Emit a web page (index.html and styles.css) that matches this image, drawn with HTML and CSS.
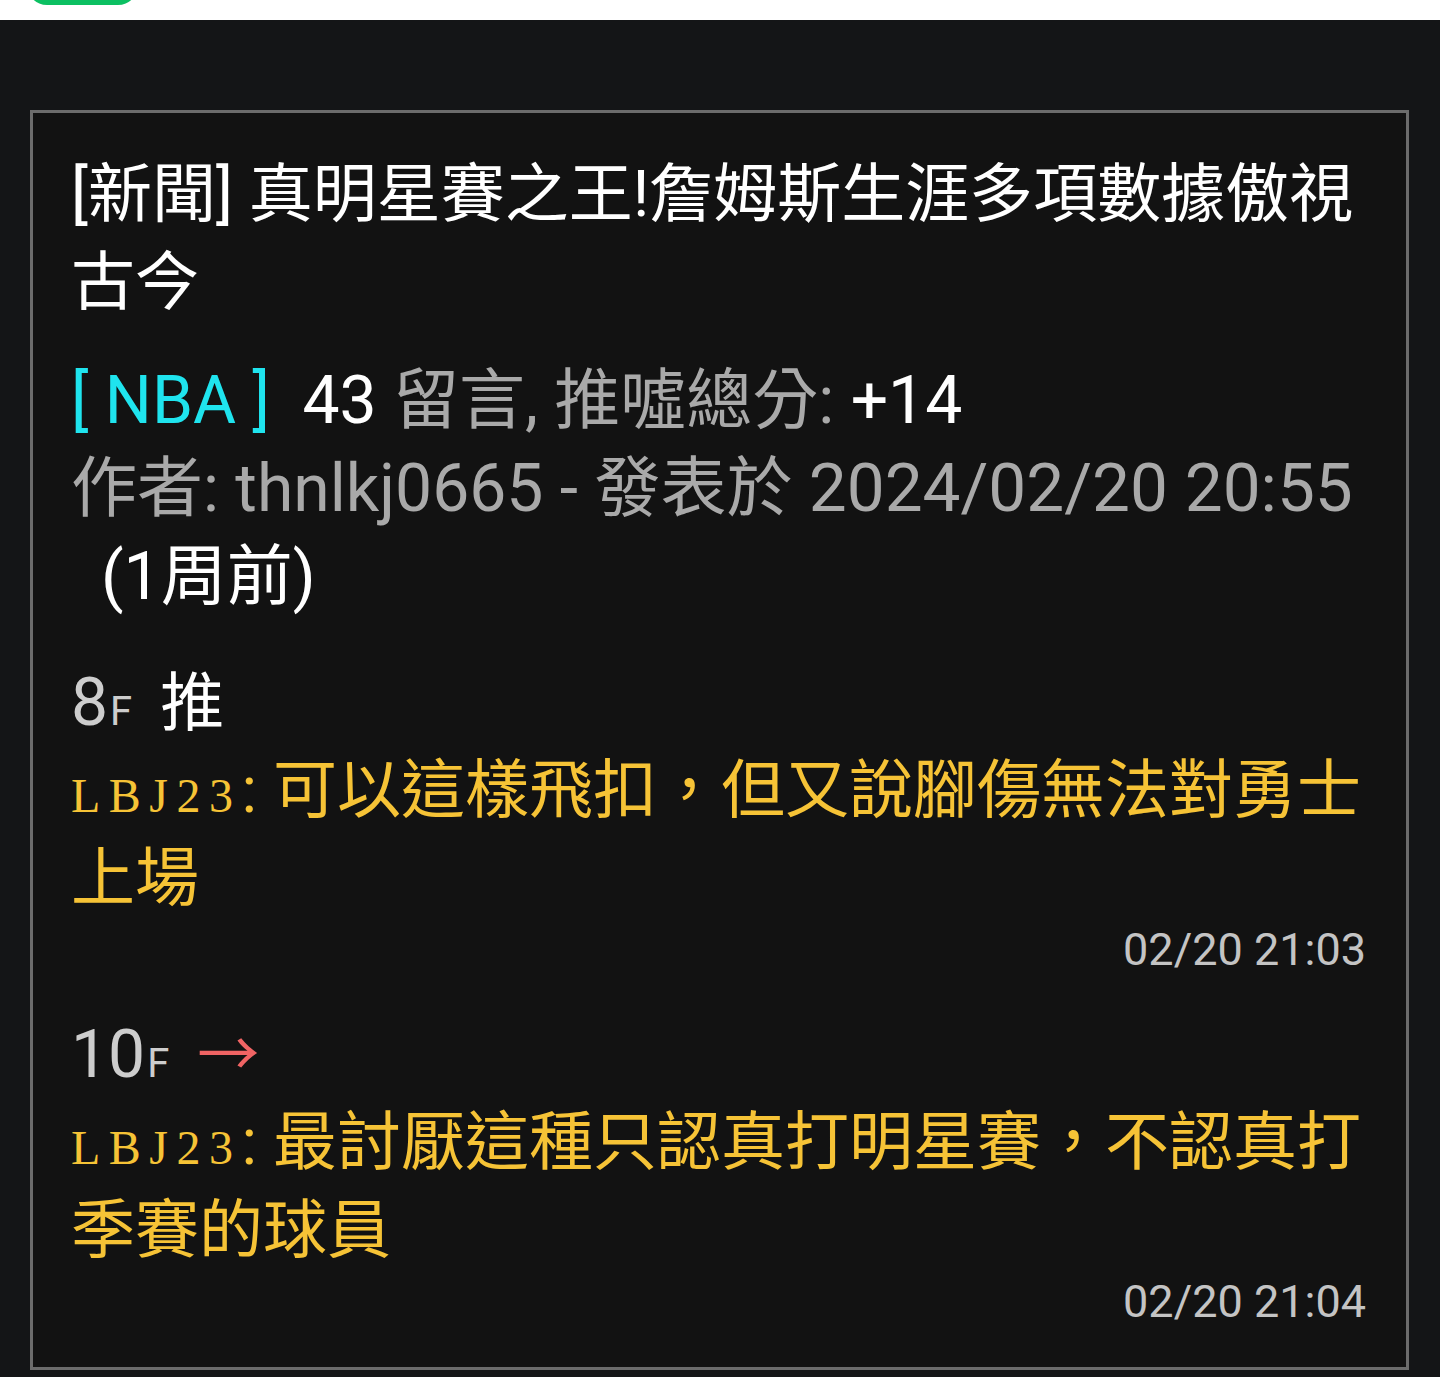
FILE: index.html
```html
<!DOCTYPE html>
<html lang="zh-Hant">
<head>
<meta charset="utf-8">
<link rel="stylesheet" href="styles.css">
</head>
<body>
<div class="topbar"><div class="pill"></div></div>
<main class="page">
  <article class="card">
    <h1 class="title">[新聞] 真明星賽之王!詹姆斯生涯多項數據傲視古今</h1>
    <div class="meta">
      <div class="meta-line"><span class="board">[ NBA ]</span> <span class="hi">43</span> 留言, 推噓總分: <span class="hi">+14</span></div>
      <div class="meta-line">作者: thnlkj0665 - 發表於 <span class="date">2024/02/20 20:55</span></div>
      <div class="meta-line ago">(1周前)</div>
    </div>
    <section class="comment">
      <div class="floor"><span class="num">8</span><span class="f">F</span><span class="tag push">推</span></div>
      <p class="text"><span class="user">LBJ23</span>: 可以這樣飛扣，但又說腳傷無法對勇士上場</p>
      <div class="time">02/20 21:03</div>
    </section>
    <section class="comment">
      <div class="floor"><span class="num">10</span><span class="f">F</span><span class="tag arrow">→</span></div>
      <p class="text"><span class="user">LBJ23</span>: 最討厭這種只認真打明星賽，不認真打季賽的球員</p>
      <div class="time">02/20 21:04</div>
    </section>
  </article>
</main>
</body>
</html>
```
FILE: styles.css
```css
html, body {
  margin: 0;
  padding: 0;
}
body {
  background: #141517;
  font-family: Roboto, "Noto Sans CJK TC", sans-serif;
  color: #ffffff;
  width: 1440px;
  min-height: 1377px;
}
.topbar {
  height: 20px;
  background: #ffffff;
  overflow: hidden;
}
.pill {
  width: 111px;
  height: 40px;
  margin-top: -35px;
  margin-left: 27px;
  border-radius: 20px;
  background: #0cc062;
}
.page {
  padding: 90px 31px 0 30px;
}
.card {
  border: 3px solid #6c6c6c;
  background: #121212;
  padding: 38px 40px 35px 38px;
}
.title {
  margin: 0;
  font-weight: 400;
  font-size: 64px;
  line-height: 88px;
  color: #ffffff;
}
.meta {
  margin-top: 30px;
  font-size: 66px;
  line-height: 88px;
  color: #a9a9a9;
}
.meta span {
  line-height: 1;
}
.board {
  color: #1fe4ee;
  margin-right: 16px;
}
.hi {
  color: #ffffff;
}
.date {
  font-size: 67.5px;
}
.ago {
  color: #ffffff;
  padding-left: 30px;
}
.comment {
  margin-top: 38px;
}
.comment + .comment {
  margin-top: 31px;
}
.floor {
  font-size: 66px;
  line-height: 88px;
  color: #cdcdcd;
}
.floor span {
  line-height: 1;
}
.f {
  font-size: 40px;
  margin-left: 2px;
}
.tag {
  margin-left: 28px;
}
.push {
  color: #ffffff;
  font-size: 64px;
}
.arrow {
  color: #f06464;
  font-size: 62px;
  margin-left: 28px;
}
.text {
  margin: 0;
  font-size: 64px;
  line-height: 88px;
  color: #f6c336;
}
.user {
  font-family: "Liberation Serif", serif;
  font-size: 48px;
  line-height: 1;
  letter-spacing: 8.5px;
}
.time {
  margin-top: -3px;
  text-align: right;
  font-size: 45px;
  line-height: 60px;
  color: #c4c4c4;
}
```
